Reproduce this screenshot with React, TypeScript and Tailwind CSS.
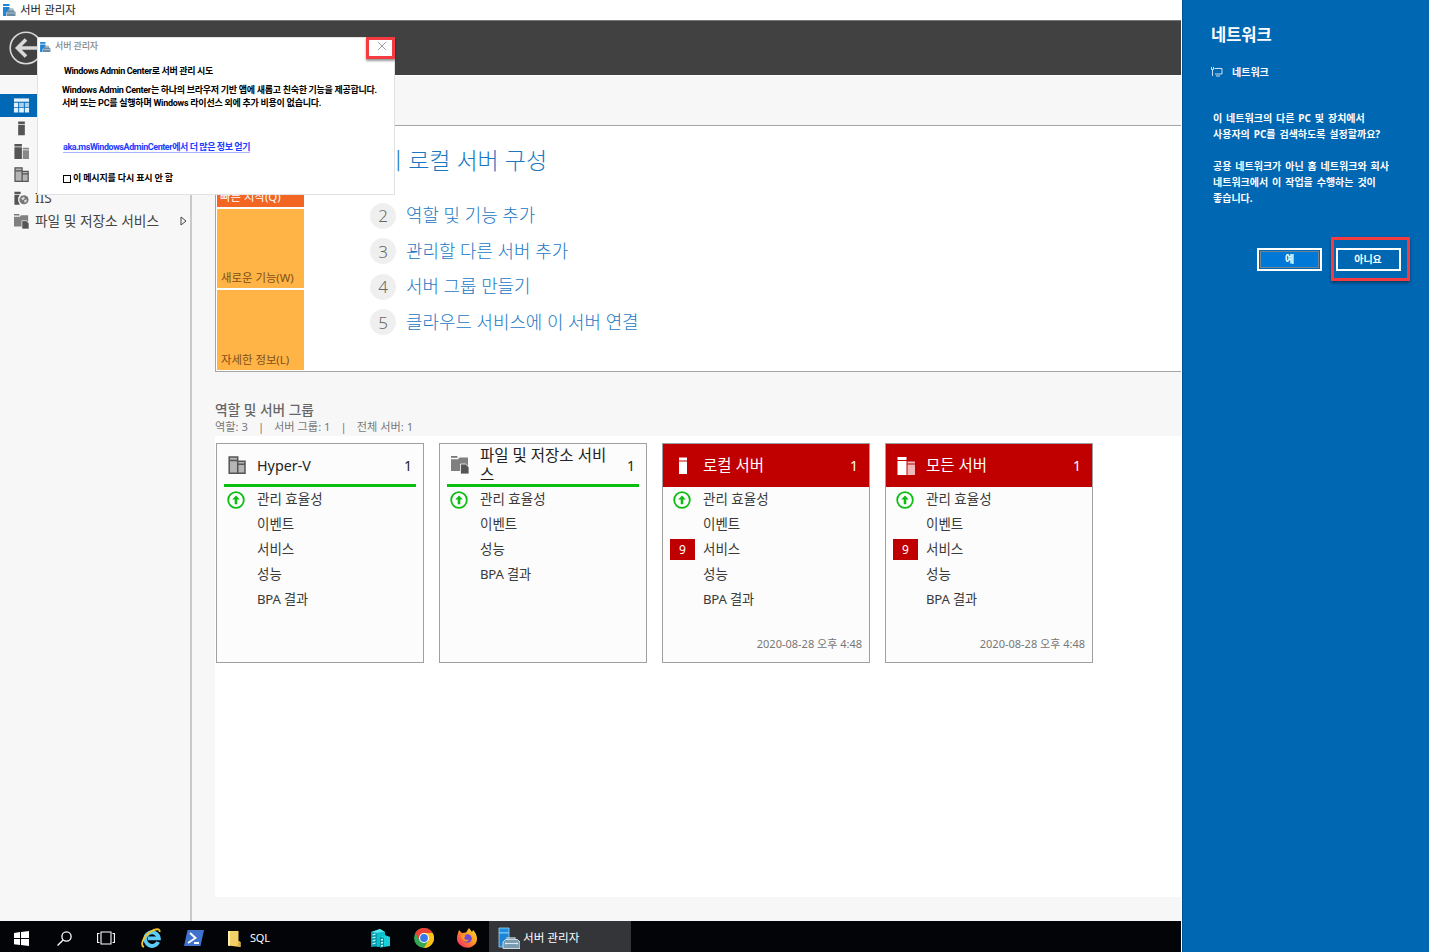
import React from "react";

function ServerManagerLogo({ className }: { className: string }) {
  return (
    <svg viewBox="0 0 22 22" className={className}>
      <path d="M1 1h10v5H1z" fill="#1e8fe0" stroke="#9fd3f5" strokeWidth="0.8" />
      <path d="M1 6h10v14H1z" fill="#1b86d6" stroke="#9fd3f5" strokeWidth="0.8" />
      <path d="M9 13v-2h8v2" fill="none" stroke="#b9c9d2" strokeWidth="1.3" />
      <path d="M6 14l1.500-1.500h12L22 15v6.500H5V15z" fill="#7b9bb0" stroke="#d8e4ea" strokeWidth="0.9" />
      <path d="M7 16.500h13M8 15.500v2M19 15.500v2" stroke="#e8f1f6" strokeWidth="0.9" />
    </svg>
  );
}

function SmallServerLogo({ className }: { className: string }) {
  return (
    <svg viewBox="0 0 13 12" className={className}>
      <path d="M0 0h6.500v2H0zM0 3h6.500v3L3 8.500V12H0z" fill="#1e86d8" />
      <path d="M5.500 6.500V5h4.500v1.500" fill="none" stroke="#6e8ca0" />
      <path d="M3.500 8.200l2-2h5l2 2V12h-9z" fill="#6e8ca0" />
      <path d="M4 9h8" stroke="#c9d8e2" strokeWidth=".7" />
    </svg>
  );
}

type IconName = "dashboard" | "local" | "all" | "hyperv" | "iis" | "files";

function RoleIcon({ name, className, light = false }: { name: IconName; className: string; light?: boolean }) {
  const c = light ? "#fff" : "#555";
  return (
    <svg viewBox="0 0 18 18" className={className}>
      {name === "dashboard" && (
        <g>
          <path d="M1 1.500h16v3.500H1z" fill="#e6f2fb" />
          <path d="M1 6h4.500v4.500H1zM1 11.500h4.500V16.500H1z" fill="#e6f2fb" />
          <path d="M6.500 6h5v4.500h-5zM12.500 6H17v4.500h-4.500z" fill="#a9d2ef" />
          <path d="M6.500 11.500h5v5h-5zM12.500 11.500H17v5h-4.500z" fill="#e6f2fb" />
        </g>
      )}
      {name === "local" && <path d="M5 .5h8v3H5zM5 4.500h8V17H5z" fill={c} />}
      {name === "all" && (
        <g>
          <path d="M.5 0h9v3h-9zM.5 4h9v14h-9z" fill={c} />
          <path d="M10.500 4.500H18v2h-7.500zM10.500 7.500H18V18h-7.500z" fill={light ? "#f0b8b8" : "#888"} />
        </g>
      )}
      {name === "hyperv" && (
        <g fill="#b5b5b5" stroke="#555" strokeWidth="1.500">
          <path d="M1.200 .9h8.500v16.300H1.200zM9.700 5.300h7.300v11.900H9.700z" />
          <path d="M1.200 4.500h8.500M9.700 8.300H17" />
        </g>
      )}
      {name === "iis" && (
        <g>
          <path d="M.5 1H8v2.500H.5zM.5 4.500H7L5 8v4l2 4.500H.5z" fill="#555" />
          <circle cx="12" cy="10.500" r="5.500" fill="#777" />
          <path d="M8.500 9l3.500-2 1 2-2.500 2zM12 11.500l3-1.500 .5 2-2.500 2.500z" fill="#ddd" />
        </g>
      )}
      {name === "files" && (
        <g>
          <path d="M0 0h6l1 1.700H0z" fill="#777" />
          <path d="M0 3.200h7l1.500-1.700H17V15H0z" fill="#808080" />
          <path d="M9.500 8h5L18 11v7H9.500z" fill="#555" stroke="#fcfcfc" strokeWidth=".8" />
        </g>
      )}
    </svg>
  );
}

const navItems: { icon: IconName; label: string; arrow?: boolean }[] = [
  { icon: "local", label: "" },
  { icon: "all", label: "" },
  { icon: "hyperv", label: "" },
  { icon: "iis", label: "IIS" },
  { icon: "files", label: "파일 및 저장소 서비스", arrow: true },
];

function Sidebar() {
  return (
    <nav className="flex w-[192px] shrink-0 flex-col border-r-2 border-[#c9c9c9] bg-[#f7f7f7] pt-[18px] text-[13.700px] text-[#444]">
      <div className="flex h-[23px] items-center bg-[#0068b5] pl-[13px]">
        <RoleIcon name="dashboard" className="size-[17px]" />
      </div>
      {navItems.map((item) => (
        <div key={item.icon} className="flex h-[23.200px] items-center pl-[14px] leading-[20px]">
          <RoleIcon name={item.icon} className="mr-[7px] size-[15px] shrink-0" />
          <span className="-mt-px -ml-px whitespace-nowrap">{item.label}</span>
          {item.arrow && (
            <svg viewBox="0 0 7 10" className="mr-[3px] ml-auto h-[10px] w-[7px]">
              <path d="M1 1l5 4-5 4z" fill="none" stroke="#444" />
            </svg>
          )}
        </div>
      ))}
    </nav>
  );
}

const steps = [
  { n: 2, label: "역할 및 기능 추가" },
  { n: 3, label: "관리할 다른 서버 추가" },
  { n: 4, label: "서버 그룹 만들기" },
  { n: 5, label: "클라우드 서비스에 이 서버 연결" },
];

function Welcome() {
  return (
    <section className="flex h-[247px] border border-r-0 border-[#a5a5a5] bg-white p-px pr-0">
      <div className="flex w-[87px] flex-col gap-[2px] text-[11.400px] leading-[16px] text-[#80501a]">
        <div className="flex h-[80px] items-end bg-[#f26522] pb-[2px] pl-[3px] text-white">빠른 시작(Q)</div>
        <div className="flex h-[79px] items-end bg-[#ffb445] pb-[2px] pl-[4px]">새로운 기능(W)</div>
        <div className="flex h-[80px] items-end bg-[#ffb445] pb-[2px] pl-[4px]">자세한 정보(L)</div>
      </div>
      <div className="flex flex-col pl-[66px] text-[#1a78c2]">
        <div className="mt-[16px] flex h-[34px] items-center pl-[11px] text-[23px] font-light">
          <span className="whitespace-nowrap">이 로컬 서버 구성</span>
        </div>
        <div className="mt-[21px] flex flex-col">
          {steps.map((s) => (
            <div key={s.n} className="flex h-[35.500px] items-center gap-[10px]">
              <span className="flex size-[26px] items-center justify-center rounded-full bg-[#efefef] text-[17px] font-light text-[#666]">
                {s.n}
              </span>
              <span className="text-[17.900px] font-light whitespace-nowrap">{s.label}</span>
            </div>
          ))}
        </div>
      </div>
    </section>
  );
}

interface CardData {
  icon: IconName;
  title: string;
  rows: string[];
  alert?: boolean;
}

const cards: CardData[] = [
  { icon: "hyperv", title: "Hyper-V", rows: ["관리 효율성", "이벤트", "서비스", "성능", "BPA 결과"] },
  { icon: "files", title: "파일 및 저장소 서비스", rows: ["관리 효율성", "이벤트", "성능", "BPA 결과"] },
  { icon: "local", title: "로컬 서버", rows: ["관리 효율성", "이벤트", "서비스", "성능", "BPA 결과"], alert: true },
  { icon: "all", title: "모든 서버", rows: ["관리 효율성", "이벤트", "서비스", "성능", "BPA 결과"], alert: true },
];

function RoleCard({ card }: { card: CardData }) {
  return (
    <article className="flex h-[220px] w-[208px] flex-col border border-[#a0a0a0] bg-[#fcfcfc]">
      <header
        className={
          card.alert
            ? "flex h-[43px] items-center bg-[#c00000] pr-[11px] pl-[11px] text-white"
            : "mx-[7px] flex h-[43px] items-center border-b-[3px] border-[#0dbd10] pt-[2px] pr-[4px] pl-[4px] text-[#222]"
        }
      >
        <RoleIcon name={card.icon} light={card.alert} className="mr-[11px] size-[18px] shrink-0" />
        <span
          className={
            card.title === "Hyper-V"
              ? "w-[136px] text-[14.300px] leading-[19px]"
              : "w-[136px] text-[15.500px] leading-[19px] break-all"
          }
        >
          {card.title}
        </span>
        <span className="ml-auto text-[14px]">1</span>
      </header>
      <ul className="flex flex-col text-[13.500px] leading-[25px] text-[#3a3a3a]">
        {card.rows.map((row) => (
          <li key={row} className="flex h-[25px] items-center">
            <span className="flex w-[40px] items-center pl-[7px]">
              {row === "관리 효율성" && (
                <svg viewBox="0 0 18 18" className="ml-[3px] size-[18px]">
                  <circle cx="9" cy="9" r="7.800" fill="#fff" stroke="#0dbd10" strokeWidth="1.800" />
                  <path d="M9 4.500l3.800 4h-2.500v4.800H7.700V8.500H5.200z" fill="#0dbd10" />
                </svg>
              )}
              {row === "서비스" && card.alert && (
                <span className="flex h-[21px] w-[25px] items-center justify-center bg-[#c00000] text-[12px] text-white">9</span>
              )}
            </span>
            <span className={row === "BPA 결과" ? "text-[13.200px] tracking-[-0.2px]" : ""}>{row}</span>
          </li>
        ))}
      </ul>
      {card.alert && (
        <footer className="mt-auto pr-[7px] pb-[9px] text-right text-[11px] leading-[18px] text-[#777]">
          2020-08-28 오후 4:48
        </footer>
      )}
    </article>
  );
}

function AdminCenterDialog() {
  return (
    <div className="absolute top-[37px] left-[37px] flex h-[158px] w-[358px] flex-col border border-[#e2e2e2] bg-white font-['Roboto','Noto_Sans_CJK_KR',sans-serif] text-[9px] font-bold text-black">
      <div className="flex h-[17px] items-center pl-[2px] font-medium text-[#888]">
        <SmallServerLogo className="mr-[4px] h-[10px] w-[11px]" />
        <span className="tracking-[-0.1px]">서버 관리자</span>
      </div>
      <div className="mt-[10px] pl-[26px] leading-[13px] tracking-[-0.34px] whitespace-nowrap">
        Windows Admin Center로 서버 관리 시도
      </div>
      <div className="mt-[6px] pl-[24px] leading-[13px] whitespace-nowrap">
        <div className="tracking-[-0.28px]">
          Windows Admin Center는 하나의 브라우저 기반 앱에 새롭고 친숙한 기능을 제공합니다.
        </div>
        <div className="tracking-[-0.25px]">서버 또는 PC를 실행하며 Windows 라이선스 외에 추가 비용이 없습니다.</div>
      </div>
      <div className="mt-[31px] ml-[25px] w-fit leading-[13px] tracking-[-0.43px] whitespace-nowrap text-[#1c3cff] underline decoration-[#aab4ff] underline-offset-2">
        aka.msWindowsAdminCenter에서 더 많은 정보 얻기
      </div>
      <div className="mt-[18px] ml-[25px] flex items-center gap-[2px] leading-[13px]">
        <span className="size-[8px] border border-black" />
        <span className="tracking-[-0.15px]">이 메시지를 다시 표시 안 함</span>
      </div>
      <div className="absolute -top-px left-[328px] flex h-[22px] w-[29px] items-center justify-center border-[3px] border-[#f43c40] shadow-[0_2px_2px_rgba(0,0,0,0.4)]">
        <svg viewBox="0 0 8 8" className="-mt-[4px] ml-[3px] size-[8px]">
          <path d="M0 0l8 8M8 0L0 8" stroke="#888" strokeWidth=".8" />
        </svg>
      </div>
    </div>
  );
}

function NetworkPanel() {
  return (
    <aside className="flex w-[247px] shrink-0 flex-col border-l border-[#005292] bg-[#0067b3] text-[10px] font-bold [word-spacing:1.300px] text-white">
      <h1 className="mt-[23px] ml-[28px] text-[16.500px] leading-[24px] font-bold">네트워크</h1>
      <div className="mt-[17px] ml-[28px] flex h-[16px] items-center gap-[9px]">
        <svg viewBox="0 0 12 10" className="h-[10px] w-[12px]" fill="none" stroke="#fff" strokeWidth=".8">
          <path d="M3.500 1.500H11v5.500H4M5 9h4M1.500 3v6M.5 0v2.500h2V0" />
        </svg>
        네트워크
      </div>
      <p className="mt-[30px] ml-[30px] leading-[16px] whitespace-nowrap">
        이 네트워크의 다른 PC 및 장치에서
        <br />
        사용자의 PC를 검색하도록 설정할까요?
      </p>
      <p className="mt-[16px] ml-[30px] leading-[16px] whitespace-nowrap">
        공용 네트워크가 아닌 홈 네트워크와 회사
        <br />
        네트워크에서 이 작업을 수행하는 것이
        <br />
        좋습니다.
      </p>
      <div className="mt-[31px] ml-[74px] flex items-center">
        <button className="flex h-[23px] w-[65px] border-2 border-white bg-[#0067b3] p-px">
          <span className="flex h-full w-full items-center justify-center border border-[#6f8390] bg-[#0078d7]">예</span>
        </button>
        <div className="ml-[9px] flex h-[44px] w-[79px] items-center justify-center border-[3px] border-[#f43c40] pr-[5px] shadow-[0_2px_3px_rgba(0,0,0,0.4)]">
          <button className="h-[23px] w-[65px] border-2 border-white">아니요</button>
        </div>
      </div>
    </aside>
  );
}

function Taskbar() {
  return (
    <footer className="flex h-[31px] shrink-0 items-center bg-[#020408] pt-[3px] text-white">
      <svg viewBox="0 0 15 15" className="ml-[14px] size-[15px]" fill="#fff">
        <path d="M0 2l6-.9v6H0zM7 1l8-1v7.100H7zM0 8h6v6l-6-.8zM7 8h8v7l-8-1z" />
      </svg>
      <svg viewBox="0 0 15 15" className="ml-[28px] size-[15px]" fill="none" stroke="#fff" strokeWidth="1.300">
        <circle cx="9.500" cy="5.500" r="4.600" />
        <path d="M6.200 9L.5 14.500" />
      </svg>
      <svg viewBox="0 0 18 14" className="ml-[25px] h-[14px] w-[18px]" fill="none" stroke="#fff" strokeWidth="1.100">
        <path d="M4 1h10v12H4zM2.500 2.500H.6v9h1.900M15.500 2.500h1.900v9h-1.900" />
      </svg>
      <svg viewBox="0 0 20 20" className="ml-[26px] size-[20px]">
        <path d="M17.200 14a6.800 6.800 0 1 1 .6-3.600H7" fill="none" stroke="#5ccbf5" strokeWidth="3.900" />
        <path d="M3 19C-1 17.500 2 9 8.500 4.500S19.500.5 18.500 4" fill="none" stroke="#f4c430" strokeWidth="1.800" />
      </svg>
      <svg viewBox="0 0 20 16" className="ml-[23px] h-[16px] w-[20px]">
        <path d="M3.500 0H20l-3.500 16H0z" fill="#3f73cd" />
        <path d="M6 3l5.500 5L4 13M10 13h5" fill="none" stroke="#fff" strokeWidth="1.900" />
      </svg>
      <svg viewBox="0 0 13 17" className="ml-[24px] h-[17px] w-[13px]">
        <path d="M0 1h10.500v10l2 1v5L0 15.500z" fill="#f3cf68" />
        <path d="M0 1h2v15l-2-.5z" fill="#fff0ae" />
        <path d="M10.500 11l2 1v5l-3-.5z" fill="#dcae43" />
      </svg>
      <span className="ml-[9px] w-[40px] text-[11px] tracking-[-0.2px]">SQL</span>
      <svg viewBox="0 0 20 20" className="ml-[80px] size-[20px]">
        <path d="M1 4l9-3 5 3v14l-14 1z" fill="#089eb0" />
        <path d="M1 4l9-3 5 3-8 1z" fill="#57e8ef" />
        <path d="M7 5l8-1v14l-8 1z" fill="#0bc1ce" />
        <path d="M10 9l5-2 5 2v9l-10 1.500z" fill="#18cfd9" />
        <path d="M10 9l4 1v9l-4 .5z" fill="#078c9d" />
        <path d="M2.500 7l3-1M2.500 10l3-1M2.500 13l3-1M2.500 16l3-1M11 12l2-.5M11 15l2-.5M11 18l2-.5" stroke="#caffff" strokeWidth="1.300" />
      </svg>
      <svg viewBox="0 0 20 20" className="ml-[24px] size-[20px]">
        <circle cx="10" cy="10" r="10" fill="#35a853" />
        <path d="M1.300 5A10 10 0 0 1 18.700 5H10L5.700 12.500z" fill="#e94335" />
        <path d="M10 5h8.700A10 10 0 0 1 10 20l4.300-7.500z" fill="#fbc116" />
        <circle cx="10" cy="10" r="5" fill="#fff" />
        <circle cx="10" cy="10" r="3.900" fill="#3978e8" />
      </svg>
      <svg viewBox="0 0 20 20" className="ml-[23px] size-[20px]">
        <defs>
          <linearGradient id="fox" x1="1" y1="0" x2="0" y2="1">
            <stop stopColor="#ffe22e" />
            <stop offset=".45" stopColor="#ff9722" />
            <stop offset="1" stopColor="#f5156c" />
          </linearGradient>
        </defs>
        <path d="M1 5l1-3 3 3 4-.5L12 0l3 4 1-2c4 4 5 9 3 13-5 8-17 5-19-3-.5-3 .5-5 1-7z" fill="url(#fox)" />
        <circle cx="10.500" cy="10.500" r="4.300" fill="#7149d5" />
        <path d="M4 7l5 .5-2 2.500 2 2 3-.5c-2 4-7 2-8-4.500z" fill="#ff9820" />
      </svg>
      <div className="-mt-[3px] ml-[12px] flex h-[31px] w-[142px] items-center bg-[#343539] pt-[3px] pl-[9px] text-[11.600px]">
        <ServerManagerLogo className="mr-[3px] size-[22px]" />
        서버 관리자
      </div>
    </footer>
  );
}

export default function App() {
  return (
    <div className="relative flex h-[952px] w-[1429px] overflow-hidden bg-white font-['Noto_Sans','Noto_Sans_CJK_KR',sans-serif]">
      <main className="flex w-[1182px] flex-col pr-px">
        <header className="flex h-[20px] shrink-0 items-center pl-[3px] text-[11.500px] text-[#222]">
          <SmallServerLogo className="mr-[4px] h-[12px] w-[13px]" />
          <span>서버 관리자</span>
        </header>
        <div className="flex h-[55px] shrink-0 items-center border-t border-[#777] bg-[#414141] pl-[9px]">
          <svg viewBox="0 0 34 34" className="size-[34px]" fill="none" stroke="#d9d9d9">
            <circle cx="17" cy="17" r="15.800" strokeWidth="1.600" />
            <path d="M8.500 17H30M17 8.500L8.500 17l8.500 8.500" strokeWidth="3.600" />
          </svg>
        </div>
        <div className="flex min-h-0 flex-1 pt-px">
          <Sidebar />
          <div className="flex flex-1 flex-col bg-[#f7f7f7] pt-[49px] pl-[23px]">
            <Welcome />
            <div className="mt-[29px] text-[13.700px] leading-[18px] font-medium text-[#666]">역할 및 서버 그룹</div>
            <div className="flex h-[15px] items-center gap-[10px] text-[11.200px] leading-[15px] text-[#777]">
              <span>역할: 3</span>
              <span>|</span>
              <span>서버 그룹: 1</span>
              <span>|</span>
              <span>전체 서버: 1</span>
            </div>
            <div className="mt-[2px] mb-[24px] flex flex-1 gap-[15px] bg-white pt-[7px] pl-[1px]">
              {cards.map((card) => (
                <RoleCard key={card.title} card={card} />
              ))}
            </div>
          </div>
        </div>
        <Taskbar />
      </main>
      <NetworkPanel />
      <AdminCenterDialog />
    </div>
  );
}
